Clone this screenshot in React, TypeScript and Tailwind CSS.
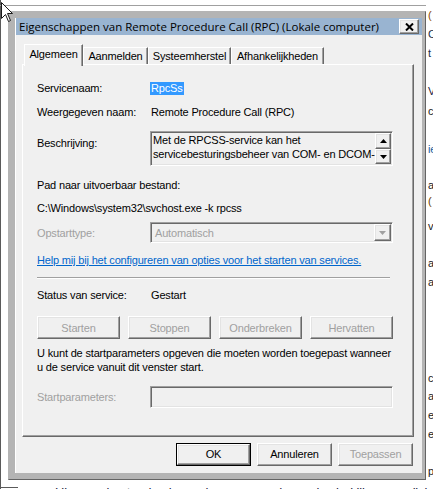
import React from "react";

const raised =
  "border border-t-white border-l-white border-r-[#696969] border-b-[#696969] shadow-[inset_-1px_-1px_0_#a0a0a0,inset_1px_1px_0_#e3e3e3] bg-[#f0f0f0]";
const sunken =
  "border border-t-[#a0a0a0] border-l-[#a0a0a0] border-r-white border-b-white shadow-[inset_1px_1px_0_#696969,inset_-1px_-1px_0_#e3e3e3]";

function Arrow({ dir, color }: { dir: "up" | "down"; color: string }) {
  return (
    <svg width="7" height="4" viewBox="0 0 7 4" className="block">
      {dir === "up" ? (
        <polygon points="3.5,0 7,4 0,4" fill={color} />
      ) : (
        <polygon points="0,0 7,0 3.5,4" fill={color} />
      )}
    </svg>
  );
}

function PushButton({
  label,
  disabled,
  wide,
}: {
  label: string;
  disabled?: boolean;
  wide?: boolean;
}) {
  return (
    <div
      className={`${raised} ${wide ? "w-[83px]" : "w-[75px]"} h-[23px] flex items-center justify-center ${
        disabled ? "text-[#a0a0a0]" : "text-black"
      }`}
    >
      {label}
    </div>
  );
}

function Tab({ label, active, width }: { label: string; active?: boolean; width: string }) {
  return (
    <div
      className={`${width} flex justify-center border-l border-t border-r border-l-white border-t-white border-r-[#696969] shadow-[inset_-1px_0_0_#a0a0a0] bg-[#f0f0f0] ${
        active ? "relative z-10 h-[22px] -mb-[2px] pt-[3px]" : "h-[17px] pt-[2px]"
      }`}
    >
      <span className="leading-[13px]">{label}</span>
    </div>
  );
}

function Row({
  label,
  labelMuted,
  children,
  className,
}: {
  label: string;
  labelMuted?: boolean;
  children?: React.ReactNode;
  className: string;
}) {
  return (
    <div className={`flex items-center ${className}`}>
      <div className={`w-[113px] shrink-0 ${labelMuted ? "text-[#a0a0a0]" : ""}`}>{label}</div>
      {children}
    </div>
  );
}

function Backdrop() {
  const fragments: [number, string, string][] = [
    [8, "(", "text-[#8a4a00]"],
    [27, "C", "text-[#20304a]"],
    [46, "t", "text-[#20304a]"],
    [84, "V", "text-[#1a1a40]"],
    [104, "c", "text-[#202020]"],
    [142, "ie", "text-[#2060a0]"],
    [178, "a", "text-[#202020]"],
    [194, "(", "text-[#6a4000]"],
    [219, "v", "text-[#202020]"],
    [256, "a", "text-[#202020]"],
    [275, "a", "text-[#202020]"],
    [371, "c", "text-[#202020]"],
    [389, "a", "text-[#202020]"],
    [408, "e", "text-[#202020]"],
    [427, "e", "text-[#202020]"],
    [464, "p", "text-[#202020]"],
  ];
  return (
    <div className="absolute inset-0">
      <div className="absolute left-0 top-0 bottom-0 w-px bg-[#5a5a5a]" />
      <div className="absolute left-0 top-[5px] w-[426px] h-px bg-[#a0a0a0]" />
      {fragments.map(([top, text, color], i) => (
        <div
          key={i}
          className={`absolute left-[428px] text-[11px] leading-[14px] ${color}`}
          style={{ top }}
        >
          {text}
        </div>
      ))}
      <div className="absolute left-0 top-[487px] w-[18px] h-px bg-[#5a5a5a]" />
      <div className="absolute left-[55px] top-[485px] whitespace-nowrap text-[13px] leading-[15px] text-[#1a1a40]">
        Hiermee kunt u de eigenschappen van de service bekijken en wijzigen
      </div>
    </div>
  );
}

function Cursor() {
  return (
    <svg
      width="13"
      height="21"
      viewBox="0 0 13 21"
      className="absolute left-[1px] top-[2px] z-20"
    >
      <path
        d="M0.5 0.5 L0.5 16.5 L4.5 12.5 L7.5 19.5 L9.5 18.5 L6.5 11.5 L11.5 11.5 Z"
        fill="white"
        stroke="#1a1a1a"
        strokeWidth="1"
        strokeLinejoin="miter"
      />
    </svg>
  );
}

export default function App() {
  return (
    <div className="relative w-[433px] h-[489px] overflow-hidden bg-white font-['Liberation_Sans',Arial,sans-serif] text-[11px] tracking-[-0.17px] text-black">
      <Backdrop />
      <Cursor />

      {/* dialog window */}
      <div className="absolute left-[8px] top-[11px] w-[418px] h-[469px] flex flex-col bg-[#b4b4b4] border border-[#b4b4b4] border-r-[#646464] border-b-[#646464] pl-[6px] pr-[3px] pt-[6px] pb-[6px]">
        <div className="flex-1 flex flex-col border-l border-white">
          {/* caption */}
          <div className="h-[17px] shrink-0 bg-[#99b4d1] flex items-center justify-between pl-[3px] pr-[3px]">
            <span className="font-['Open_Sans',sans-serif] text-[11.5px] tracking-normal leading-[15px] whitespace-nowrap">
              Eigenschappen van Remote Procedure Call (RPC) (Lokale computer)
            </span>
            <div className={`${raised} w-[20px] h-[15px] flex items-center justify-center`}>
              <svg width="9" height="8" viewBox="0 0 9 8">
                <path d="M1 0.5 L8 7.5 M8 0.5 L1 7.5" stroke="black" strokeWidth="2" />
              </svg>
            </div>
          </div>

          {/* client area */}
          <div className="flex-1 flex flex-col bg-[#f0f0f0] pl-[6px] pr-[8px] pt-[9px] pb-[7px]">
            <div className="h-[20px] flex items-end pl-[2px]">
              <Tab label="Algemeen" active width="w-[59px]" />
              <Tab label="Aanmelden" width="w-[65px]" />
              <Tab label="Systeemherstel" width="w-[83px]" />
              <Tab label="Afhankelijkheden" width="w-[93px]" />
            </div>

            <div className="h-[373px] flex flex-col border border-t-white border-l-white border-r-[#696969] border-b-[#696969] shadow-[inset_-1px_-1px_0_#a0a0a0] pl-[14px] pt-[16px] leading-[14px]">
              <Row label="Servicenaam:" className="h-[14px]">
                <span className="bg-[#3399ff] text-white px-px leading-[13px]">RpcSs</span>
              </Row>

              <Row label="Weergegeven naam:" className="h-[14px] mt-[10px]">
                <span className="pl-px">Remote Procedure Call (RPC)</span>
              </Row>

              <div className="flex items-start h-[35px] mt-[12px]">
                <div className="w-[113px] shrink-0 pt-[5px]">Beschrijving:</div>
                <div className={`${sunken} w-[243px] h-[35px] flex`}>
                  <div className="flex-1 pl-[2px] pt-px leading-[14px] overflow-hidden whitespace-nowrap">
                    <div>Met de RPCSS-service kan het</div>
                    <div>servicebesturingsbeheer van COM- en DCOM-</div>
                  </div>
                  <div className="w-[16px] flex flex-col mr-px mt-px">
                    <div className={`${raised} h-[16px] flex items-center justify-center`}>
                      <Arrow dir="up" color="black" />
                    </div>
                    <div className={`${raised} h-[15px] flex items-center justify-center`}>
                      <Arrow dir="down" color="black" />
                    </div>
                  </div>
                </div>
              </div>

              <div className="h-[14px] mt-[12px]">Pad naar uitvoerbaar bestand:</div>
              <div className="h-[14px] mt-[9px]">C:\Windows\system32\svchost.exe -k rpcss</div>

              <Row label="Opstarttype:" labelMuted className="h-[21px] mt-[7px]">
                <div className={`${sunken} w-[243px] h-[21px] flex items-center`}>
                  <span className="flex-1 pl-[4px] text-[#a0a0a0]">Automatisch</span>
                  <div className={`${raised} w-[17px] h-[17px] mr-px flex items-center justify-center`}>
                    <Arrow dir="down" color="#a0a0a0" />
                  </div>
                </div>
              </Row>

              <div className="h-[14px] mt-[10px] text-[#0066cc] underline">
                Help mij bij het configureren van opties voor het starten van services.
              </div>

              <div className="w-[353px] mt-[10px] h-[2px] border-t border-t-[#a0a0a0] border-b border-b-white" />

              <Row label="Status van service:" className="h-[14px] mt-[9px]">
                <span className="pl-px">Gestart</span>
              </Row>

              <div className="w-[356px] mt-[14px] flex justify-between">
                <PushButton label="Starten" disabled wide />
                <PushButton label="Stoppen" disabled wide />
                <PushButton label="Onderbreken" disabled wide />
                <PushButton label="Hervatten" disabled wide />
              </div>

              <div className="mt-[7px] leading-[14px]">
                <div>U kunt de startparameters opgeven die moeten worden toegepast wanneer</div>
                <div>u de service vanuit dit venster start.</div>
              </div>

              <Row label="Startparameters:" labelMuted className="h-[22px] mt-[12px]">
                <div className={`${sunken} w-[243px] h-[22px]`} />
              </Row>
            </div>

            <div className="mt-[6px] flex justify-end gap-[6px] pr-px">
              <div className="border border-black">
                <div className={`${raised} w-[73px] h-[21px] flex items-center justify-center`}>OK</div>
              </div>
              <PushButton label="Annuleren" />
              <PushButton label="Toepassen" disabled />
            </div>
          </div>
        </div>
      </div>
    </div>
  );
}
